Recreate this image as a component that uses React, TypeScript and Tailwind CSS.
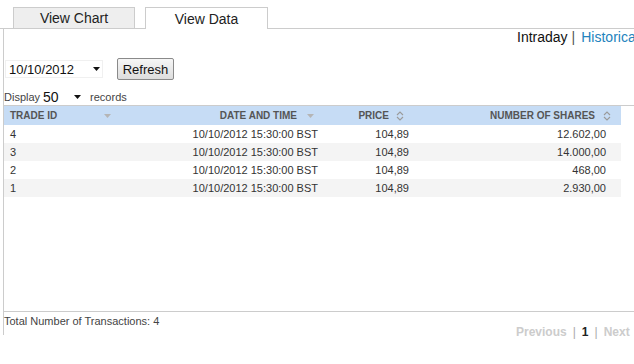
import React from 'react';

// Sort indicators shown in the table header
const SortDown = () => (
    <svg width="7" height="4" viewBox="0 0 7 4" className="shrink-0">
        <path d="M0 0 L7 0 L3.5 4 Z" fill="#b5b5b5" />
    </svg>
);

const SortBoth = () => (
    <svg width="8" height="10" viewBox="0 0 8 10" className="shrink-0">
        <path d="M1 4 L4 1 L7 4" fill="none" stroke="#9a9a9a" strokeWidth="1.1" />
        <path d="M1 6 L4 9 L7 6" fill="none" stroke="#9a9a9a" strokeWidth="1.1" />
    </svg>
);

const Caret = () => (
    <svg width="7" height="4" viewBox="0 0 7 4" className="shrink-0">
        <path d="M0 0 L7 0 L3.5 4 Z" fill="#111" />
    </svg>
);

interface Trade {
    id: number;
    date: string;
    price: string;
    shares: string;
}

const trades: Trade[] = [
    { id: 4, date: '10/10/2012 15:30:00 BST', price: '104,89', shares: '12.602,00' },
    { id: 3, date: '10/10/2012 15:30:00 BST', price: '104,89', shares: '14.000,00' },
    { id: 2, date: '10/10/2012 15:30:00 BST', price: '104,89', shares: '468,00' },
    { id: 1, date: '10/10/2012 15:30:00 BST', price: '104,89', shares: '2.930,00' },
];

export default function App() {
    return (
        <div className="w-[634px] h-[364px] overflow-hidden bg-white font-['Liberation_Sans',Arial,sans-serif] text-[#222]">
            {/* Tabs */}
            <div className="flex items-end h-[29px] border-b border-[#cccccc] pl-[13px] gap-[10px]">
                <div className="w-[122px] h-[21px] flex items-center justify-center bg-[#eeeeee] border border-b-0 border-[#cccccc] text-[14px] leading-none">
                    View Chart
                </div>
                <div className="w-[123px] h-[22px] -mb-px flex items-center justify-center bg-white border border-b-0 border-[#cccccc] text-[14px] leading-none">
                    View Data
                </div>
            </div>

            {/* Panel */}
            <div className="ml-[3px] border-l border-[#cccccc] h-[306px]">
                <div className="flex h-[16px] items-center pl-[513px] whitespace-nowrap text-[14px] leading-none">
                    <span className="text-[#111]">Intraday</span>
                    <span className="ml-[4px] text-[#555]">|</span>
                    <span className="ml-[6px] text-[#2383bd]">Historical</span>
                </div>

                {/* Date picker + refresh */}
                <div className="flex items-center h-[22px] mt-[13px] ml-[1px]">
                    <div className="w-[98px] h-[18px] flex items-center justify-between pl-[3px] pr-[2px] bg-white border border-[#f0f0f0] text-[13px] leading-none text-[#111]">
                        <span>10/10/2012</span>
                        <Caret />
                    </div>
                    <button className="ml-[14px] w-[57px] h-[22px] flex items-center justify-center rounded-[2px] border border-[#8a8a8a] bg-gradient-to-b from-[#f6f6f6] to-[#dddddd] text-[13px] leading-none text-[#111]">
                        Refresh
                    </button>
                </div>

                {/* Display N records */}
                <div className="flex items-center h-[14px] mt-[10px] text-[11px] leading-none text-[#444]">
                    <span>Display</span>
                    <div className="ml-[1px] w-[44px] h-[14px] flex items-center justify-between pl-[2px] pr-[4px] bg-white text-[14px] text-[#111]">
                        <span>50</span>
                        <Caret />
                    </div>
                    <span className="ml-[5px]">records</span>
                </div>

                {/* Table area */}
                <div className="mt-px h-[207px] border-y border-[#cccccc]">
                    <div className="w-[617px]">
                        <div className="flex h-[19px] items-center bg-[#c6dcf5] text-[10px] font-bold leading-none text-[#555]">
                            <div className="w-[120px] flex items-center justify-between pl-[6px] pr-[13px]">
                                <span>TRADE ID</span>
                                <SortDown />
                            </div>
                            <div className="w-[200px] flex items-center justify-end gap-[10px] pr-[10px]">
                                <span>DATE AND TIME</span>
                                <SortDown />
                            </div>
                            <div className="w-[91px] flex items-center justify-end gap-[7px] pr-[11px]">
                                <span>PRICE</span>
                                <SortBoth />
                            </div>
                            <div className="w-[206px] flex items-center justify-end gap-[8px] pr-[10px]">
                                <span>NUMBER OF SHARES</span>
                                <SortBoth />
                            </div>
                        </div>
                        {trades.map((t, i) => (
                            <div
                                key={t.id}
                                className={`flex h-[18px] items-center text-[11px] leading-none text-[#333] ${
                                    i % 2 === 1 ? 'bg-[#f4f4f4]' : 'bg-white'
                                }`}
                            >
                                <div className="w-[120px] pl-[6px]">{t.id}</div>
                                <div className="w-[200px] text-right pr-[6px]">{t.date}</div>
                                <div className="w-[91px] text-right pr-[6px]">{t.price}</div>
                                <div className="w-[206px] text-right pr-[15px]">{t.shares}</div>
                            </div>
                        ))}
                    </div>
                </div>

                <div className="h-[18px] leading-[18px] text-[11px] text-[#444]">
                    Total Number of Transactions: 4
                </div>
                <div className="-mt-[5px] flex h-[14px] items-center pl-[512px] whitespace-nowrap text-[12px] font-bold leading-none">
                    <span className="text-[#cccccc]">Previous</span>
                    <span className="ml-[6px] font-normal text-[#aaaaaa]">|</span>
                    <span className="ml-[6px] text-[#222]">1</span>
                    <span className="ml-[6px] font-normal text-[#aaaaaa]">|</span>
                    <span className="ml-[6px] text-[#cccccc]">Next</span>
                </div>
            </div>
        </div>
    );
}
